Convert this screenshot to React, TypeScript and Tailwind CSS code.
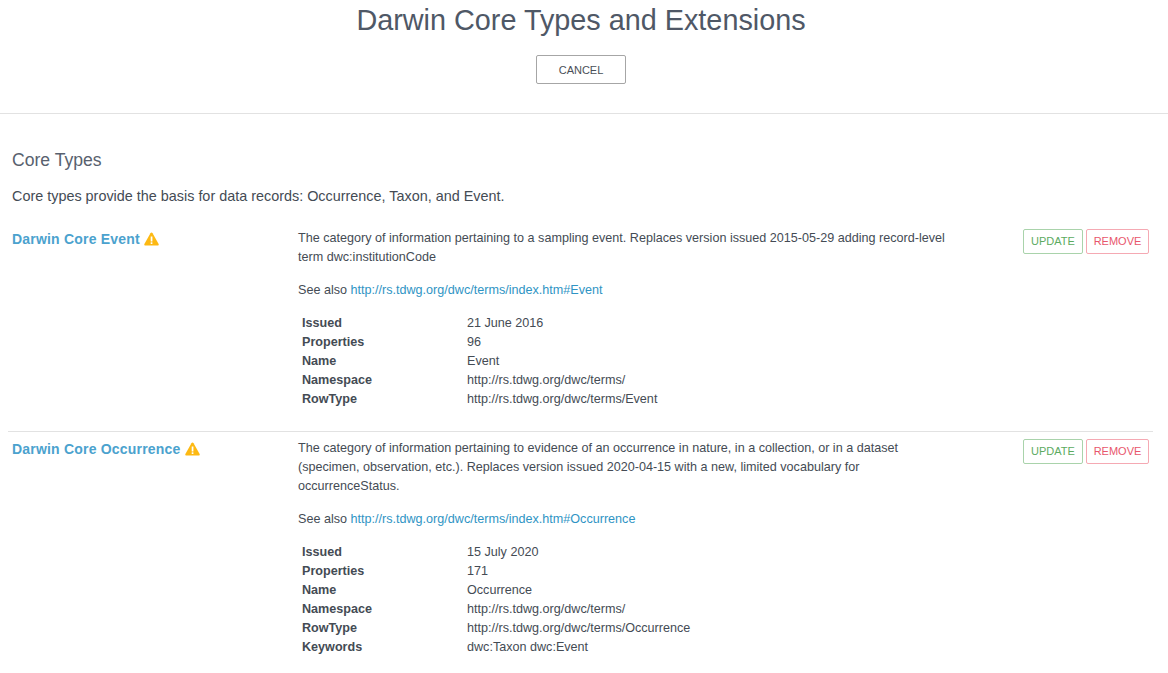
import React from "react";

interface Row {
  label: string;
  value: string;
}

interface CoreType {
  title: string;
  description: string[];
  link: string;
  rows: Row[];
}

const coreTypes: CoreType[] = [
  {
    title: "Darwin Core Event",
    description: [
      "The category of information pertaining to a sampling event. Replaces version issued 2015-05-29 adding record-level",
      "term dwc:institutionCode",
    ],
    link: "http://rs.tdwg.org/dwc/terms/index.htm#Event",
    rows: [
      { label: "Issued", value: "21 June 2016" },
      { label: "Properties", value: "96" },
      { label: "Name", value: "Event" },
      { label: "Namespace", value: "http://rs.tdwg.org/dwc/terms/" },
      { label: "RowType", value: "http://rs.tdwg.org/dwc/terms/Event" },
    ],
  },
  {
    title: "Darwin Core Occurrence",
    description: [
      "The category of information pertaining to evidence of an occurrence in nature, in a collection, or in a dataset",
      "(specimen, observation, etc.). Replaces version issued 2020-04-15 with a new, limited vocabulary for",
      "occurrenceStatus.",
    ],
    link: "http://rs.tdwg.org/dwc/terms/index.htm#Occurrence",
    rows: [
      { label: "Issued", value: "15 July 2020" },
      { label: "Properties", value: "171" },
      { label: "Name", value: "Occurrence" },
      { label: "Namespace", value: "http://rs.tdwg.org/dwc/terms/" },
      { label: "RowType", value: "http://rs.tdwg.org/dwc/terms/Occurrence" },
      { label: "Keywords", value: "dwc:Taxon dwc:Event" },
    ],
  },
];

const WarningIcon = () => (
  <svg width="15" height="14" viewBox="0 0 15 14" className="ml-[4px] mt-[-1px] shrink-0">
    <path d="M7.5 0.5 C8 0.5 8.3 0.8 8.6 1.2 L14.6 11.9 C15 12.7 14.6 13.5 13.7 13.5 L1.3 13.5 C0.4 13.5 0 12.7 0.4 11.9 L6.4 1.2 C6.7 0.8 7 0.5 7.5 0.5 Z" fill="#fdb913" />
    <rect x="6.7" y="4.5" width="1.7" height="5" fill="#ffffff" />
    <rect x="6.7" y="10.3" width="1.7" height="1.7" fill="#ffffff" />
  </svg>
);

const CoreTypeItem = ({ item }: { item: CoreType }) => (
  <div className="flex">
    <div className="w-[290px] shrink-0 pl-1">
      <div className="flex items-center h-[20px] mt-[-2px]">
        <a className="text-[14px] font-bold text-[#4ba2ce] tracking-[0.2px]">{item.title}</a>
        <WarningIcon />
      </div>
    </div>
    <div className="w-[660px] shrink-0">
      <div className="text-[12.6px] leading-[19px] mt-[-2px]">
        {item.description.map((line) => (
          <div key={line} className="whitespace-nowrap">{line}</div>
        ))}
      </div>
      <p className="text-[12.6px] leading-[19px] mt-[14px]">
        See also <a className="text-[#2f94c4]">{item.link}</a>
      </p>
      <div className="mt-[14px] pl-1">
        {item.rows.map((row) => (
          <div key={row.label} className="flex text-[12.6px] h-[19px] leading-[19px]">
            <div className="w-[165px] font-bold">{row.label}</div>
            <div>{row.value}</div>
          </div>
        ))}
      </div>
    </div>
    <div className="flex-1 flex justify-end gap-[3px] pr-[4px] mt-[-2px]">
      <button className="w-[60px] h-[25px] border border-[#a9d3ab] rounded-[2px] text-[11px] text-[#5cab5f]">UPDATE</button>
      <button className="w-[63px] h-[25px] border border-[#f5a9b3] rounded-[2px] text-[11px] text-[#e8566c]">REMOVE</button>
    </div>
  </div>
);

export default function App() {
  return (
    <div className="min-h-screen bg-white text-[#444b54] font-['Liberation_Sans',Arial,sans-serif] overflow-hidden">
      <header className="flex flex-col items-center border-b border-[#e2e2e2] h-[114px] pr-[6px]">
        <h1 className="text-[28.8px] leading-[34px] mt-[3px] text-[#4f5866]">Darwin Core Types and Extensions</h1>
        <button className="mt-[18px] w-[90px] h-[29px] pt-[1px] border border-[#a6a6a6] rounded-[2px] text-[11px] text-[#4a4f57]">CANCEL</button>
      </header>
      <main className="pl-2 pr-[15px]">
        <h2 className="pl-1 mt-[36px] text-[17.6px] leading-[20px] text-[#58616e]">Core Types</h2>
        <p className="pl-1 mt-[16px] text-[14.4px] leading-[20px]">
          Core types provide the basis for data records: Occurrence, Taxon, and Event.
        </p>
        <div className="mt-[25px] pb-[22px] border-b border-[#e2e2e2]">
          <CoreTypeItem item={coreTypes[0]} />
        </div>
        <div className="mt-[9px]">
          <CoreTypeItem item={coreTypes[1]} />
        </div>
      </main>
    </div>
  );
}
